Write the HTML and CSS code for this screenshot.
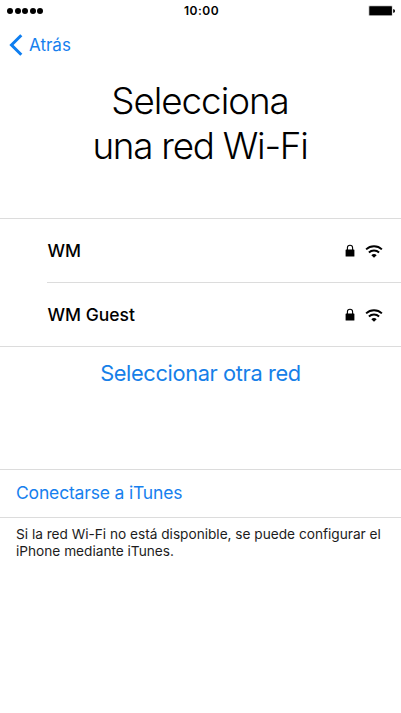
FILE: index.html
```
<!DOCTYPE html>
<html lang="es">
<head>
<meta charset="utf-8">
<title>Selecciona una red Wi-Fi</title>
<link rel="stylesheet" href="styles.css">
</head>
<body>
<svg class="symbols" aria-hidden="true">
  <symbol id="lock" viewBox="0 0 10 13">
    <path d="M2.4 6V3.8a2.6 2.6 0 0 1 5.2 0v2.2" fill="none" stroke="#000" stroke-width="1.1"/>
    <rect x=".6" y="5.6" width="8.8" height="7" rx=".4"/>
  </symbol>
  <symbol id="wifi" viewBox="0 0 18 13">
    <path d="M1.1 4.4a11.4 11.4 0 0 1 15.8 0M3.9 7.5a7.4 7.4 0 0 1 10.2 0" fill="none" stroke="#000" stroke-width="1.9"/>
    <path d="M6.3 10.2a4 4 0 0 1 5.4 0L9 12.8z"/>
  </symbol>
</svg>
<header class="status">
  <span class="signal"><i></i><i></i><i></i><i></i><i></i></span>
  <span class="time">10:00</span>
  <svg class="battery" viewBox="0 0 28 12"><rect x=".5" y=".5" width="24" height="10.5" rx="1" fill="#ccc"/><rect x="1.3" y="1.3" width="22.6" height="9" rx=".5"/><path d="M25.2 4.2h.8q1 .5 1 1.8t-1 1.8h-.8z"/></svg>
</header>
<nav class="nav">
  <svg class="chevron" viewBox="0 0 14 22"><path d="M12.3 1.2 2.5 11l9.8 9.8" fill="none" stroke="#0e7ef0" stroke-width="3"/></svg>
  <a class="back">Atrás</a>
</nav>
<h1 class="title"><span class="line1">Selecciona</span><br><span class="line2">una red Wi-Fi</span></h1>
<ul class="networks">
  <li class="network"><span class="name">WM</span><svg class="lock"><use href="#lock"/></svg><svg class="wifi"><use href="#wifi"/></svg></li>
  <li class="network"><span class="name">WM Guest</span><svg class="lock"><use href="#lock"/></svg><svg class="wifi"><use href="#wifi"/></svg></li>
</ul>
<a class="other"><span>Seleccionar otra red</span></a>
<a class="itunes"><span>Conectarse a iTunes</span></a>
<p class="note"><span>Si la red Wi-Fi no está disponible, se puede configurar el</span><br><span class="note2">iPhone mediante iTunes.</span></p>
</body>
</html>
```
FILE: styles.css
```
* { box-sizing: border-box; }
body { margin: 0; width: 401px; height: 713px; overflow: hidden; background: #fff; color: #000; font-family: Inter, "Liberation Sans", sans-serif; }
.symbols { display: none; }
.status { display: grid; grid-template-columns: 1fr auto 1fr; align-items: center; height: 22px; padding: 0 5px 0 7px; }
.signal { display: flex; gap: 1.5px; }
.signal i { width: 6px; height: 6px; border-radius: 50%; background: #000; }
.time { font-size: 12px; font-weight: 600; letter-spacing: .5px; line-height: 22px; }
.battery { width: 28px; height: 12px; justify-self: end; }
.nav { display: flex; align-items: center; gap: 6px; height: 46px; padding-left: 9px; color: #1680ee; }
.chevron { width: 14px; height: 22px; }
.back { font-size: 17px; }
.title { margin: 10px 0 0; height: 140px; padding-right: 1px; font-size: 36.8px; font-weight: 300; line-height: 45px; text-align: center; }
.line1 { letter-spacing: -1.05px; }
.line2 { letter-spacing: -1.25px; }
.networks { list-style: none; margin: 0; padding: 0 0 0 47px; height: 129px; border-top: 1px solid #dcdcdc; border-bottom: 1px solid #dcdcdc; }
.network { display: flex; align-items: center; height: 63px; padding-right: 18px; font-size: 17.5px; font-weight: 450; }
.network + .network { height: 64px; border-top: 1px solid #dcdcdc; }
.name { flex: 1; padding: 0 0 1px .5px; }
.lock { width: 10px; height: 13px; margin: 0 10.5px 0 0; }
.wifi { width: 18px; height: 13px; margin-top: 1px; }
.other { display: block; height: 122px; font-size: 21.8px; line-height: 52px; letter-spacing: -.37px; text-align: center; color: #1680e8; }
.itunes { display: block; height: 49px; padding-left: 16px; font-size: 17.5px; line-height: 46px; letter-spacing: -.17px; color: #1680ee; border-top: 1px solid #dcdcdc; border-bottom: 1px solid #dcdcdc; }
.note { margin: 8px 0 0 16px; font-size: 13.7px; line-height: 17px; letter-spacing: -.02px; white-space: nowrap; color: #1c1c1c; }
```
